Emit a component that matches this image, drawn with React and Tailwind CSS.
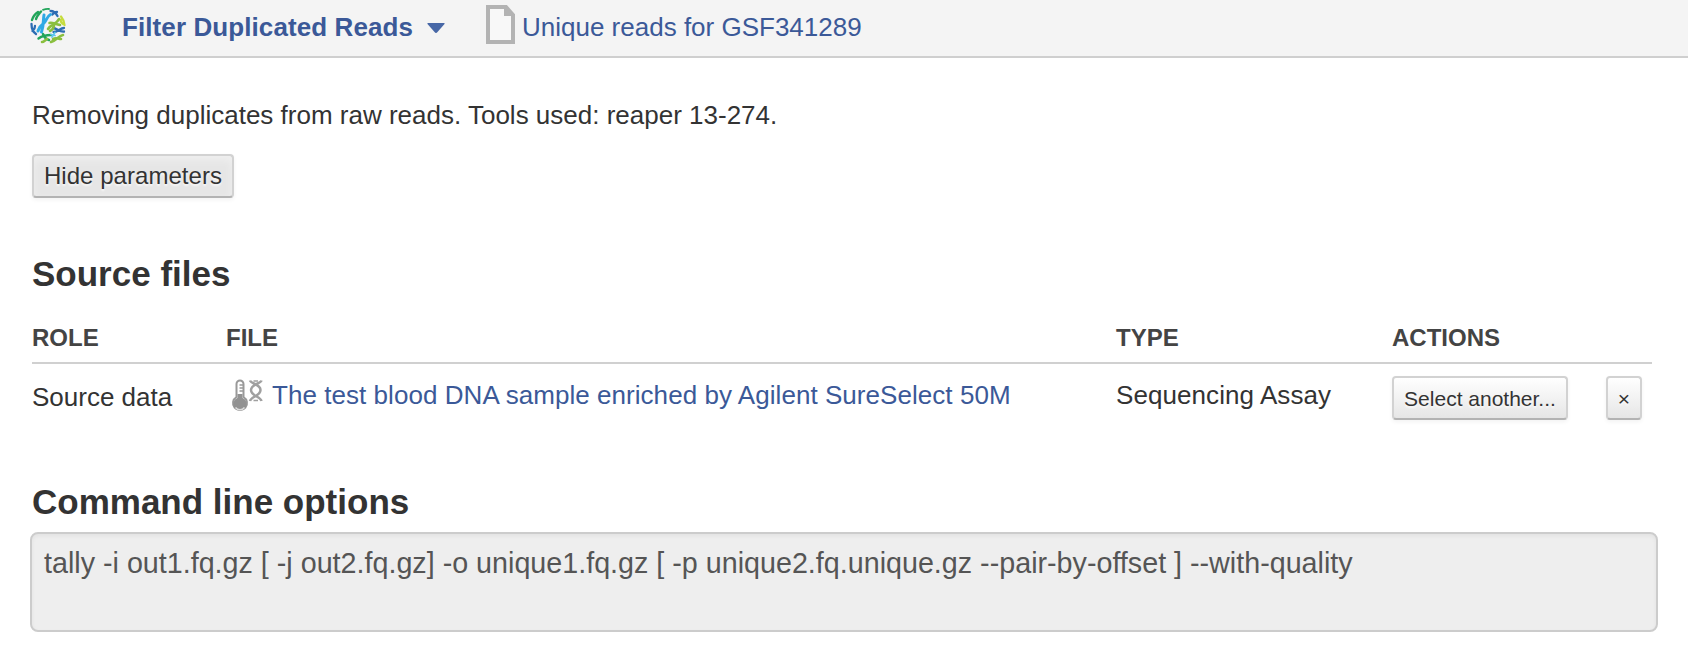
const buttonBase =
  'rounded-[4px] border-2 border-[#d2d2d2] border-b-[#b3b3b3] text-[#333] shadow-[0_2px_4px_rgba(0,0,0,0.05)] flex items-center justify-center whitespace-nowrap [text-shadow:0_2px_2px_rgba(255,255,255,0.75)]';

function AppLogo() {
  return (
    <svg className="block h-9 w-9" viewBox="0 0 36 36" fill="none" strokeLinecap="round">
      <g stroke="#22a55a" strokeWidth="2.4">
        <path d="M2 12C3 8.500 5 6 8 4M6 11C7 8 9 6 11 3.500" />
        <path strokeWidth="1.800" d="M13 1.800Q16 .8 19 1" />
        <path d="M8.500 30.500C12 28 15 27 21 27M13 26C14 29 16 31 19 32" />
      </g>
      <g stroke="#2d6db3" strokeWidth="2.300">
        <path d="M20.500 3Q25 3 27.500 8M22.500 6.500Q24 4 27 4" />
        <path d="M1.500 16C1.500 20 3 24 6 26M5 18C5 21 3 22 2.500 23" />
        <path d="M23 20C27 20 29 24 34 23.500M34 20C30 20 28 24 23.500 24" />
      </g>
      <g stroke="#c6dc3c" strokeWidth="2.300">
        <path d="M31 8.500Q34 12 34.500 17M30.500 12Q31 15 33 16" />
      </g>
      <g stroke="#2fa9e4" strokeWidth="3">
        <path d="M14 7C13 12 14 17 11.500 24M20.500 6.500C16 9 17 13 13 16S9 20 8 23" />
      </g>
      <g stroke="#8abf3f" strokeWidth="2.600">
        <path d="M19.500 15C22 14 25 16 30 17M29 11C27 16 21 16 18 21M24 17C24 20 22 22 20 23" />
        <path d="M33 27C28 28 27 32 21 34M23 31C26 29 28 31 31 31" />
        <path d="M12 34C14 34 15 32 17 31" />
      </g>
      <path stroke="#5cc5ed" strokeWidth="1.800" d="M21 26.500L25 27.500M25 24.500L22 29" />
    </svg>
  );
}

function PageIcon() {
  return (
    <svg className="block h-[39px] w-[29px]" viewBox="0 0 29 39">
      <path fill="#f8f8f8" stroke="#b3b3b3" strokeWidth="4" d="M2 2h18l7 8v27H2z" />
      <path fill="#b3b3b3" d="M18 2h3l7 8v1H18z" />
    </svg>
  );
}

function AssayIcon() {
  return (
    <svg className="block h-[34px] w-8" viewBox="0 0 32 34" fill="none">
      <path stroke="#999" strokeWidth="2" fill="#fff" d="M5.5 18V5a3.5 3.5 0 0 1 7 0v13a7 7 0 1 1-7 0z" />
      <circle cx="9" cy="25" r="6.6" fill="#929292" />
      <path fill="#929292" d="M6.5 15h5v6h-5z" />
      <path stroke="#999" strokeWidth="1.4" d="M8.5 6H12M8.5 9H12M8.5 12H12" />
      <path stroke="#ddd" strokeWidth="1.4" d="M4.5 28.5c2.5 3 6.500 3 9 0" />
      <g stroke="#a0a0a0" strokeWidth="2.500">
        <path d="M19 1.500C20 5 29.500 5 29.500 11S20 17.500 19 22M30.500 1.500C29.500 5 20 5 20 11S29.500 17.500 30.500 22" />
        <path strokeWidth="1.300" d="M22.500 2h4.500M22.500 21.500h4.500" />
      </g>
    </svg>
  );
}

function Header() {
  return (
    <header className="flex h-[58px] items-start border-b-2 border-[#cfcfcf] bg-[#f4f4f4] text-[26px] leading-[54px] text-[#3b5998]">
      <div className="ml-[30px] mt-2">
        <AppLogo />
      </div>
      <h1 className="ml-14 w-[291px] whitespace-nowrap font-bold tracking-[0.09px]">Filter Duplicated Reads</h1>
      <svg className="ml-[14px] mt-[23px] h-[11px] w-[18px]" viewBox="0 0 18 11">
        <path fill="#4767a6" d="M1 0h16q1 0 .5 1l-7 8q-1.500 2-3 0l-7-8Q0 0 1 0z" />
      </svg>
      <div className="ml-[41px] mt-[5px]">
        <PageIcon />
      </div>
      <a className="ml-[7px] whitespace-nowrap">Unique reads for GSF341289</a>
    </header>
  );
}

export default function App() {
  return (
    <div className="h-[666px] overflow-hidden bg-white font-['Liberation_Sans',Arial,sans-serif] text-[26px] text-[#333]">
      <Header />
      <main className="flex flex-col pl-8 pr-[30px]">
        <p className="mt-[42px] h-[30px] whitespace-nowrap leading-[30px]">
          Removing duplicates from raw reads. Tools used: reaper 13-274.
        </p>
        <button className={`${buttonBase} mt-6 h-11 w-[202px] bg-[#e6e6e6] text-[24px] tracking-[0.05px] shadow-[inset_0_4px_8px_rgba(255,255,255,0.4),0_2px_4px_rgba(0,0,0,0.05)]`}>
          Hide parameters
        </button>
        <h2 className="mt-[56px] h-10 whitespace-nowrap text-[35px] font-bold leading-10">Source files</h2>
        <section className="mr-[6px] mt-[20px]">
          <div className="grid h-[50px] grid-cols-[194px_890px_276px_1fr] border-b-2 border-[#d0d0d0] text-[24px] font-bold leading-[47px] text-[#444]">
            <span>ROLE</span>
            <span>FILE</span>
            <span>TYPE</span>
            <span>ACTIONS</span>
          </div>
          <div className="grid h-[72px] grid-cols-[194px_890px_276px_1fr] leading-[62px]">
            <span className="pt-[2px]">Source data</span>
            <a className="flex items-start text-[#3b5998]">
              <span className="ml-[5px] mt-[15px]">
                <AssayIcon />
              </span>
              <span className="ml-[9px] whitespace-nowrap tracking-[0.05px]">The test blood DNA sample enriched by Agilent SureSelect 50M</span>
            </a>
            <span className="tracking-[0.07px]">Sequencing Assay</span>
            <div className="flex items-start pt-3 leading-none">
              <button className={`${buttonBase} h-11 w-[176px] bg-linear-to-b from-white to-[#e6e6e6] text-[21px]`}>
                Select another...
              </button>
              <button className={`${buttonBase} ml-[38px] h-11 w-9 bg-linear-to-b from-white to-[#e6e6e6] text-[21px]`}>
                ×
              </button>
            </div>
          </div>
        </section>
        <h2 className="mt-[46px] h-10 whitespace-nowrap text-[35px] font-bold leading-10">Command line options</h2>
        <div className="-ml-[2px] mt-[10px] h-[100px] whitespace-nowrap rounded-[8px] border-2 border-[#ccc] bg-[#eee] px-3 pt-[14px] text-[28px] leading-[30px] text-[#555] shadow-[inset_0_2px_4px_rgba(0,0,0,0.05)]">
          <span className="text-[28.7px]">
            tally -i out1.fq.gz [ -j out2.fq.gz] -o unique1.fq.gz [ -p unique2.fq.unique.gz --pair-by-offset ] --with-quality
          </span>
        </div>
      </main>
    </div>
  );
}
